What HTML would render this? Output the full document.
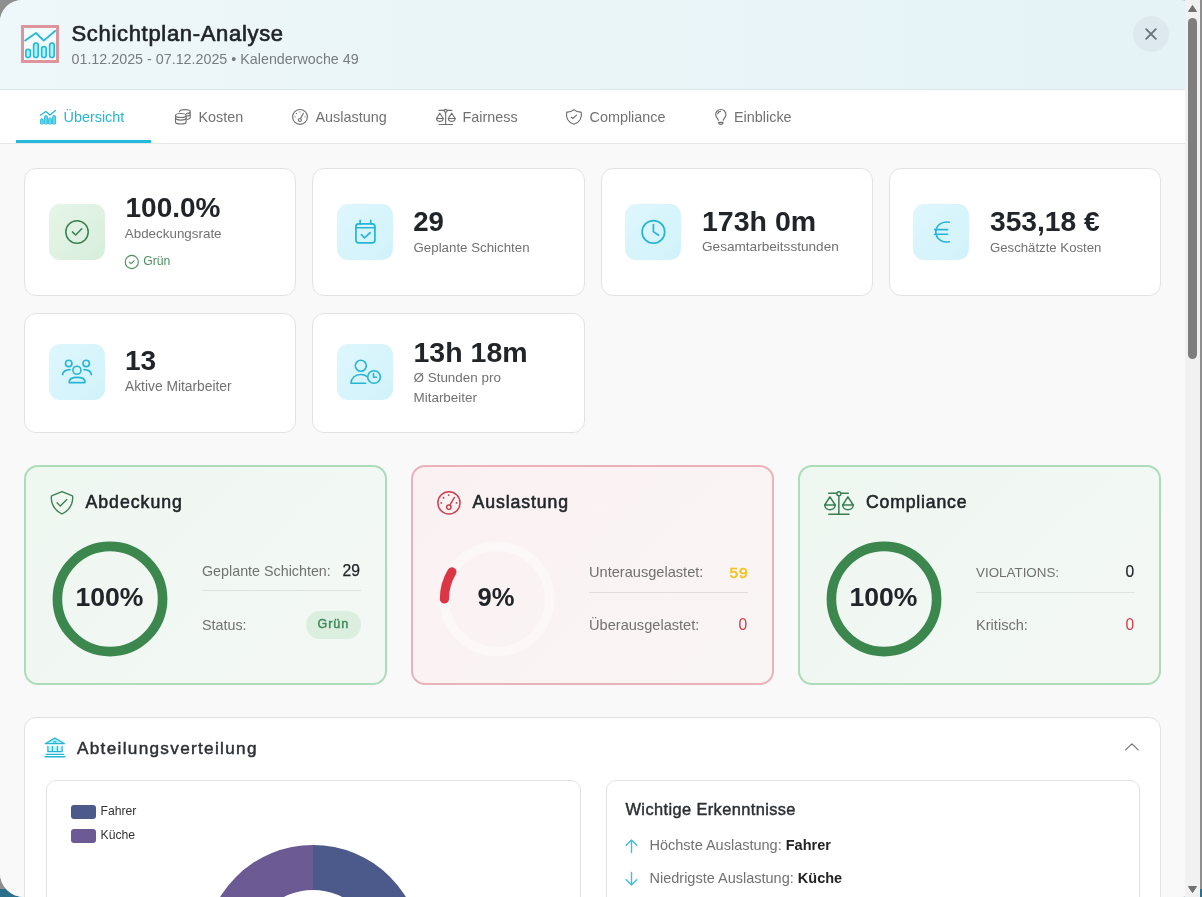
<!DOCTYPE html>
<html><head><meta charset="utf-8"><title>Schichtplan-Analyse</title>
<style>
html,body{margin:0;padding:0;width:1202px;height:897px;overflow:hidden;font-family:"Liberation Sans", sans-serif;}
body{background:#8e8e8e;position:relative}
#bgteal{position:absolute;left:0;top:889px;width:1202px;height:8px;background:#2c6f8b}
#modal{position:absolute;left:0;top:0;width:1200px;height:897px;will-change:transform;border-radius:22px 20px 20px 24px;overflow:hidden;background:#f8f8f8}
.abs{position:absolute}
.t{position:absolute;white-space:nowrap}
#header{position:absolute;left:0;top:0;width:1200px;height:89px;background:linear-gradient(90deg,#eef7f9,#e5f3f6);border-bottom:1px solid #dfe5e8}
#tabs{position:absolute;left:0;top:90px;width:1200px;height:53px;background:#fff;border-bottom:1px solid #e6e6e6}
#content{position:absolute;left:0;top:144px;width:1200px;height:753px;background:#f9f9f9}
.card{position:absolute;box-sizing:border-box;background:#fff;border:1px solid #e2e2e2;border-radius:12px}
.big{position:absolute;box-sizing:border-box;border:2px solid;border-radius:14px}
</style></head><body>
<div id="bgteal"></div>
<div id="modal">
<div id="header"></div><svg class="abs" style="left:21px;top:25px" width="38" height="38" viewBox="0 0 38 38">
<rect x="1.5" y="1.5" width="35" height="35" fill="#f2fbfd" stroke="#dc959c" stroke-width="3"/>
<polyline points="3.5,16 15,8 22.7,15.6 34.7,5.5" fill="none" stroke="#25b6d8" stroke-width="1.8" stroke-linejoin="round"/>
<rect x="4.8" y="24.3" width="4.6" height="8.2" rx="2.3" fill="#a4f6fc" stroke="#25b6d8" stroke-width="1.6"/>
<rect x="12.6" y="18" width="4.6" height="14.5" rx="2.3" fill="#a4f6fc" stroke="#25b6d8" stroke-width="1.6"/>
<rect x="20.6" y="21.5" width="4.6" height="11" rx="2.3" fill="#a4f6fc" stroke="#25b6d8" stroke-width="1.6"/>
<rect x="28.6" y="18" width="4.6" height="14.5" rx="2.3" fill="#a4f6fc" stroke="#25b6d8" stroke-width="1.6"/>
</svg><div class="t" style="left:71.5px;top:22.98px;font-size:22px;line-height:22px;color:#212529;font-weight:400;-webkit-text-stroke:0.65px #212529;letter-spacing:0.68px;">Schichtplan-Analyse</div>
<div class="t" style="left:71.5px;top:51.60px;font-size:14.3px;line-height:14.3px;color:#777c80;font-weight:400;">01.12.2025 - 07.12.2025 • Kalenderwoche 49</div>
<div class="abs" style="left:1133px;top:16px;width:36px;height:36px;border-radius:18px;background:#dde9ee"></div><svg class="abs" style="left:1145px;top:28px" width="12" height="12" viewBox="0 0 12 12"><path d="M1.2 1.2L10.8 10.8M10.8 1.2L1.2 10.8" stroke="#6b7378" stroke-width="1.9" stroke-linecap="round"/></svg><div id="tabs"></div><div class="abs" style="left:16px;top:140px;width:135px;height:3px;background:#22bbdd"></div><div class="t" style="left:63.5px;top:109.61px;font-size:14.4px;line-height:14.4px;color:#26b5d6;font-weight:400;">Übersicht</div>
<div class="t" style="left:198.5px;top:109.61px;font-size:14.4px;line-height:14.4px;color:#717171;font-weight:400;">Kosten</div>
<div class="t" style="left:315.5px;top:109.61px;font-size:14.4px;line-height:14.4px;color:#717171;font-weight:400;">Auslastung</div>
<div class="t" style="left:462.5px;top:109.61px;font-size:14.4px;line-height:14.4px;color:#717171;font-weight:400;">Fairness</div>
<div class="t" style="left:589.5px;top:109.61px;font-size:14.4px;line-height:14.4px;color:#717171;font-weight:400;">Compliance</div>
<div class="t" style="left:734px;top:109.61px;font-size:14.4px;line-height:14.4px;color:#717171;font-weight:400;">Einblicke</div>
<svg class="abs" style="left:36px;top:104px" width="24" height="24" viewBox="0 0 24 24" fill="none" stroke="#26b5d6" stroke-width="1.15" stroke-linecap="round" stroke-linejoin="round"><path d="M4.6 19.6V16a1.3 1.3 0 0 1 2.6 0v3.6zM8.6 19.6V13a1.4 1.4 0 0 1 2.8 0v6.6zM12.6 19.6V15.3a1.4 1.4 0 0 1 2.8 0v4.3zM16.6 19.6V13a1.5 1.5 0 0 1 3 0v6.6z" fill="#5fdcf0" stroke="#26b5d6" stroke-width="0.9"/>
<polyline points="4.3,11.3 9.9,7.5 13.9,11.1 19.5,6.5" stroke="#26b5d6" stroke-width="1.3"/></svg>
<svg class="abs" style="left:170px;top:104px" width="24" height="24" viewBox="0 0 24 24" fill="none" stroke="#6f6f6f" stroke-width="1.15" stroke-linecap="round" stroke-linejoin="round"><path d="M9.6 7.7A5.3 2.05 0 0 1 20.2 7.7A5.3 2.05 0 0 1 16.5 9.65M20.2 7.7V13.6M17.2 12.15A5.3 2.05 0 0 0 20.2 10.3M17.2 15.45A5.3 2.05 0 0 0 20.2 13.6"/>
<path d="M5.5 11.5V18A5.3 2 0 0 0 16.1 18V11.5z" fill="#fff"/>
<ellipse cx="10.8" cy="11.5" rx="5.3" ry="2" fill="#fff"/>
<path d="M5.5 14.1A5.3 2 0 0 0 16.1 14.1"/></svg>
<svg class="abs" style="left:288px;top:104px" width="24" height="24" viewBox="0 0 24 24" fill="none" stroke="#6f6f6f" stroke-width="1.15" stroke-linecap="round" stroke-linejoin="round"><circle cx="12" cy="12.9" r="7.4"/><circle cx="11.9" cy="16" r="1.5"/><path d="M12.6 14.6L15.4 9.3"/>
<g fill="#6f6f6f" stroke="none"><circle cx="11.9" cy="7.9" r="0.65"/><circle cx="8.4" cy="9.4" r="0.65"/><circle cx="7.1" cy="12.8" r="0.65"/><circle cx="17" cy="12.8" r="0.65"/></g></svg>
<svg class="abs" style="left:432px;top:104px" width="28" height="24" viewBox="0 0 28 24" fill="none" stroke="#6f6f6f" stroke-width="1.15" stroke-linecap="round" stroke-linejoin="round"><path d="M7 6.4h4.9M15.5 6.4h4.3"/><circle cx="13.65" cy="6.8" r="1.4"/>
<path d="M13.65 8.2v12.3M7.1 20.5h13.5"/>
<path d="M7.8 9.2L4.5 14.5h6.8z"/><path d="M4.5 14.5c0 1.8 1.5 2.9 3.3 2.9s3.4-1.1 3.4-2.9"/>
<path d="M19.7 9.2l-3.3 5.3h6.8z"/><path d="M16.4 14.5c0 1.8 1.5 2.9 3.3 2.9s3.4-1.1 3.4-2.9"/></svg>
<svg class="abs" style="left:562px;top:104px" width="24" height="24" viewBox="0 0 24 24" fill="none" stroke="#6f6f6f" stroke-width="1.15" stroke-linecap="round" stroke-linejoin="round"><path d="M11.95 5.6a10 10 0 0 0 7.2 2.5a10 10 0 0 1-7.2 12.2a10 10 0 0 1-7.2-12.2a10 10 0 0 0 7.2-2.5"/>
<path d="M9.2 13.1l1.6 1.4l3.7-3.4"/></svg>
<svg class="abs" style="left:708px;top:104px" width="24" height="24" viewBox="0 0 24 24" fill="none" stroke="#6f6f6f" stroke-width="1.15" stroke-linecap="round" stroke-linejoin="round"><path d="M10.4 16.3C10 14.6 7.7 13.3 7.7 10.6a5.1 5.1 0 0 1 10.2 0c0 2.7-2.3 4-2.7 5.7"/>
<path d="M10.6 18.4h4.5a2.25 1.9 0 0 1-4.5 0z"/><path d="M9.7 9.8a3 3 0 0 1 2.8-2.4"/></svg>
<div id="content"></div><div class="card" style="left:24.0px;top:168px;width:272.25px;height:127.5px;"></div>
<div class="card" style="left:312.25px;top:168px;width:272.25px;height:127.5px;"></div>
<div class="card" style="left:600.5px;top:168px;width:272.25px;height:127.5px;"></div>
<div class="card" style="left:888.75px;top:168px;width:272.25px;height:127.5px;"></div>
<div class="card" style="left:24.0px;top:312.5px;width:272.25px;height:120px;"></div>
<div class="card" style="left:312.25px;top:312.5px;width:272.25px;height:120px;"></div>
<div class="abs" style="left:49px;top:204px;width:56px;height:56px;border-radius:11px;background:linear-gradient(135deg,#e6f5e9,#d7eedc)"></div>
<div class="abs" style="left:337px;top:204px;width:56px;height:56px;border-radius:11px;background:linear-gradient(135deg,#def7fc,#d1f2fb)"></div>
<div class="abs" style="left:625px;top:204px;width:56px;height:56px;border-radius:11px;background:linear-gradient(135deg,#def7fc,#d1f2fb)"></div>
<div class="abs" style="left:913px;top:204px;width:56px;height:56px;border-radius:11px;background:linear-gradient(135deg,#def7fc,#d1f2fb)"></div>
<div class="abs" style="left:49px;top:344px;width:56px;height:56px;border-radius:11px;background:linear-gradient(135deg,#def7fc,#d1f2fb)"></div>
<div class="abs" style="left:337px;top:344px;width:56px;height:56px;border-radius:11px;background:linear-gradient(135deg,#def7fc,#d1f2fb)"></div>
<svg class="abs" style="left:61px;top:216px" width="32" height="32" viewBox="0 0 32 32" fill="none" stroke="#3a7f51" stroke-width="1.5" stroke-linecap="round" stroke-linejoin="round"><circle cx="16" cy="16" r="11.2"/><path d="M11.4 15.9l3.2 3.1l6.2-6.2"/></svg>
<svg class="abs" style="left:349px;top:216px" width="32" height="32" viewBox="0 0 32 32" fill="none" stroke="#26b5d6" stroke-width="1.7" stroke-linecap="round" stroke-linejoin="round"><rect x="6.95" y="7.95" width="18.95" height="18.9" rx="2.6"/><path d="M6.95 11.75h18.95M11.1 4.4v3.5M21.75 4.4v3.5"/><path d="M12.4 18.6l3.1 3.3l5.6-5.15"/></svg>
<svg class="abs" style="left:637px;top:216px" width="32" height="32" viewBox="0 0 32 32" fill="none" stroke="#26b5d6" stroke-width="1.7" stroke-linecap="round" stroke-linejoin="round"><circle cx="16.4" cy="15.9" r="11.3"/><path d="M16.4 8.6v7l5.2 3.6"/></svg>
<svg class="abs" style="left:925px;top:216px" width="32" height="32" viewBox="0 0 32 32" fill="none" stroke="#26b5d6" stroke-width="1.6" stroke-linecap="round" stroke-linejoin="round"><path d="M24.3 6.2C16 4.8 10.8 10 10.8 16S16 27.2 24.3 25.8"/><path d="M9.6 13.6h13M9.6 18.3h13"/></svg>
<svg class="abs" style="left:61px;top:356px" width="32" height="32" viewBox="0 0 32 32" fill="none" stroke="#26b5d6" stroke-width="1.6" stroke-linecap="round" stroke-linejoin="round"><circle cx="7.7" cy="7.4" r="3.2"/><circle cx="25.2" cy="7.4" r="3.2"/><circle cx="15.9" cy="14.25" r="4"/><path d="M8.2 26.6v-0.6c0-3 3.5-4.6 7.9-4.6s7.9 1.6 7.9 4.6v0.6z"/><path d="M1.6 18.6c0.3-2.6 2.6-4.9 7.4-5"/><path d="M30.4 18.6c-0.3-2.6-2.6-4.9-7.4-5"/></svg>
<svg class="abs" style="left:349px;top:356px" width="32" height="32" viewBox="0 0 32 32" fill="none" stroke="#26b5d6" stroke-width="1.6" stroke-linecap="round" stroke-linejoin="round"><circle cx="11.8" cy="9.8" r="5.5"/><path d="M2 27.3c0-5 4-8.8 9.6-8.8c2.8 0 5 0.8 6.3 2M2 27.3h14.7"/><circle cx="25" cy="21" r="6.3"/><path d="M24.5 17.6v3.6h3"/></svg>
<div class="t" style="left:125.5px;top:193.70px;font-size:28px;line-height:28px;color:#212529;font-weight:700;">100.0%</div>
<div class="t" style="left:124.8px;top:227.16px;font-size:13.4px;line-height:13.4px;color:#717171;font-weight:400;">Abdeckungsrate</div>
<svg class="abs" style="left:124px;top:253.5px" width="16" height="16" viewBox="0 0 16 16" fill="none" stroke="#4b8f61" stroke-width="1.1" stroke-linecap="round" stroke-linejoin="round"><circle cx="7.8" cy="8" r="6.6"/><path d="M5.4 8.1l1.7 1.6l3.1-3.1"/></svg><div class="t" style="left:143.2px;top:255.27px;font-size:12.2px;line-height:12.2px;color:#4b8f61;font-weight:400;">Grün</div>
<div class="t" style="left:413.2px;top:207.74px;font-size:27.6px;line-height:27.6px;color:#212529;font-weight:700;">29</div>
<div class="t" style="left:413.5px;top:240.54px;font-size:13.3px;line-height:13.3px;color:#717171;font-weight:400;">Geplante Schichten</div>
<div class="t" style="left:702px;top:206.97px;font-size:28.5px;line-height:28.5px;color:#212529;font-weight:700;">173h 0m</div>
<div class="t" style="left:702px;top:240.29px;font-size:13.6px;line-height:13.6px;color:#717171;font-weight:400;">Gesamtarbeitsstunden</div>
<div class="t" style="left:990px;top:207.23px;font-size:28.2px;line-height:28.2px;color:#212529;font-weight:700;">353,18 €</div>
<div class="t" style="left:990px;top:240.63px;font-size:13.2px;line-height:13.2px;color:#717171;font-weight:400;">Geschätzte Kosten</div>
<div class="t" style="left:125px;top:346.90px;font-size:28px;line-height:28px;color:#212529;font-weight:700;">13</div>
<div class="t" style="left:125px;top:380.22px;font-size:13.8px;line-height:13.8px;color:#717171;font-weight:400;">Aktive Mitarbeiter</div>
<div class="t" style="left:413.5px;top:337.87px;font-size:28.5px;line-height:28.5px;color:#212529;font-weight:700;">13h 18m</div>
<div class="t" style="left:413.5px;top:371.21px;font-size:13.45px;line-height:13.45px;color:#717171;font-weight:400;">Ø Stunden pro</div>
<div class="t" style="left:413.5px;top:390.51px;font-size:13.45px;line-height:13.45px;color:#717171;font-weight:400;">Mitarbeiter</div>
<div class="big" style="left:24px;top:465px;width:363px;height:219.5px;border-color:#acdcb9;background:linear-gradient(135deg,#eff7f1,#f3f8f4)"></div><div class="big" style="left:411px;top:465px;width:363px;height:219.5px;border-color:#eab3bb;background:linear-gradient(135deg,#fbf1f2,#f9f5f5)"></div><div class="big" style="left:798px;top:465px;width:363px;height:219.5px;border-color:#acdcb9;background:linear-gradient(135deg,#eff7f1,#f3f8f4)"></div><div class="t" style="left:85.5px;top:493.62px;font-size:17.7px;line-height:17.7px;color:#212529;font-weight:400;-webkit-text-stroke:0.55px #212529;letter-spacing:0.98px;">Abdeckung</div>
<div class="t" style="left:472.5px;top:493.62px;font-size:17.7px;line-height:17.7px;color:#212529;font-weight:400;-webkit-text-stroke:0.55px #212529;letter-spacing:0.9px;">Auslastung</div>
<div class="t" style="left:866px;top:493.62px;font-size:17.7px;line-height:17.7px;color:#212529;font-weight:400;-webkit-text-stroke:0.55px #212529;letter-spacing:0.79px;">Compliance</div>
<svg class="abs" style="left:49px;top:490px" width="26" height="26" viewBox="0 0 26 26" fill="none" stroke="#3a7f51" stroke-width="1.5" stroke-linecap="round" stroke-linejoin="round">
<path d="M13 1.6L3.1 5.6Q2.3 6 2.3 6.9C2.1 14.5 6 20.5 13 24C20 20.5 23.9 14.5 23.7 6.9Q23.7 6 22.9 5.6Z" stroke-width="1.35"/>
<path d="M8.1 12.7l3.2 3.4l6.5-6.5" stroke-width="1.35"/></svg><svg class="abs" style="left:436px;top:490px" width="26" height="26" viewBox="0 0 26 26" fill="none" stroke="#c9404e" stroke-width="1.5" stroke-linecap="round">
<circle cx="12.95" cy="12.85" r="11.1"/><circle cx="12.85" cy="17.2" r="2.2"/><path d="M13.9 15.2L18.3 7.5"/>
<g fill="#c9404e" stroke="none"><circle cx="12.7" cy="5.1" r="0.95"/><circle cx="7.55" cy="7.7" r="0.95"/><circle cx="5.3" cy="12.9" r="0.95"/><circle cx="20.6" cy="12.9" r="0.95"/></g></svg><svg class="abs" style="left:822px;top:490px" width="34" height="26" viewBox="0 0 34 26" fill="none" stroke="#3a7f51" stroke-width="1.5" stroke-linecap="round" stroke-linejoin="round">
<path d="M6.8 3.2h7.3M19.6 3.2h6.7"/><circle cx="16.85" cy="3.8" r="2"/>
<path d="M16.85 5.8V24.2M6.8 24.2h20.2"/>
<path d="M7.9 6.8L2.7 15h10.5z"/><path d="M2.7 15c0 2.8 2.3 4.7 5.2 4.7s5.3-1.9 5.3-4.7"/>
<path d="M25.9 6.8L20.7 15h10.5z"/><path d="M20.7 15c0 2.8 2.3 4.7 5.2 4.7s5.3-1.9 5.3-4.7"/>
</svg><svg class="abs" style="left:50px;top:539px" width="120" height="120" viewBox="0 0 120 120"><circle cx="60" cy="60" r="52.6" fill="none" stroke="#3b874e" stroke-width="9.6"/></svg>
<svg class="abs" style="left:824px;top:539px" width="120" height="120" viewBox="0 0 120 120"><circle cx="60" cy="60" r="52.6" fill="none" stroke="#3b874e" stroke-width="9.6"/></svg>
<svg class="abs" style="left:0;top:0" width="1202" height="897" viewBox="0 0 1202 897"><circle cx="497" cy="599" r="52.6" fill="none" stroke="#ffffff" stroke-opacity="0.4" stroke-width="9.6"/><path d="M444.40 599.00A52.6 52.6 0 0 1 451.91 571.91" fill="none" stroke="#dc3545" stroke-width="9.2" stroke-linecap="round"/></svg>
<div class="t" style="left:75.5px;top:584.18px;font-size:26.6px;line-height:26.6px;color:#212529;font-weight:700;">100%</div>
<div class="t" style="left:477.5px;top:585.03px;font-size:25.6px;line-height:25.6px;color:#212529;font-weight:700;">9%</div>
<div class="t" style="left:849.5px;top:584.18px;font-size:26.6px;line-height:26.6px;color:#212529;font-weight:700;">100%</div>
<div class="t" style="left:202px;top:564.10px;font-size:14.3px;line-height:14.3px;color:#717171;font-weight:400;">Geplante Schichten:</div>
<div class="t" style="left:342.5px;top:562.91px;font-size:15.7px;line-height:15.7px;color:#212529;font-weight:400;-webkit-text-stroke:0.25px #212529;">29</div>
<div class="abs" style="left:202px;top:589.5px;width:159px;height:1px;background:#dfe3e0"></div><div class="t" style="left:202px;top:618.00px;font-size:14.3px;line-height:14.3px;color:#717171;font-weight:400;">Status:</div>
<div class="abs" style="left:305.5px;top:611px;width:55.5px;height:27.5px;border-radius:14px;background:#dbeee0"></div><div class="t" style="left:317.5px;top:617.93px;font-size:12.6px;line-height:12.6px;color:#3e8a59;font-weight:400;-webkit-text-stroke:0.45px #3e8a59;letter-spacing:0.9px;">Grün</div>
<div class="t" style="left:589px;top:565.34px;font-size:14.6px;line-height:14.6px;color:#717171;font-weight:400;">Unterausgelastet:</div>
<div class="t" style="left:729.5px;top:564.66px;font-size:15.4px;line-height:15.4px;color:#f2c21b;font-weight:400;-webkit-text-stroke:0.45px #f2c21b;letter-spacing:0.9px;">59</div>
<div class="abs" style="left:589px;top:592px;width:159px;height:1px;background:#e3dcdd"></div><div class="t" style="left:589px;top:618.24px;font-size:14.6px;line-height:14.6px;color:#717171;font-weight:400;">Überausgelastet:</div>
<div class="t" style="left:738.5px;top:617.39px;font-size:15.6px;line-height:15.6px;color:#d13a4a;font-weight:400;">0</div>
<div class="t" style="left:976px;top:566.36px;font-size:13.4px;line-height:13.4px;color:#717171;font-weight:400;">VIOLATIONS:</div>
<div class="t" style="left:1125.5px;top:564.49px;font-size:15.6px;line-height:15.6px;color:#212529;font-weight:400;-webkit-text-stroke:0.2px #212529;">0</div>
<div class="abs" style="left:976px;top:592px;width:159px;height:1px;background:#dfe3e0"></div><div class="t" style="left:976px;top:618.24px;font-size:14.6px;line-height:14.6px;color:#717171;font-weight:400;">Kritisch:</div>
<div class="t" style="left:1125.5px;top:617.39px;font-size:15.6px;line-height:15.6px;color:#d13a4a;font-weight:400;">0</div>
<div class="card" style="left:24px;top:717px;width:1137px;height:400px;border-radius:12px"></div>
<svg class="abs" style="left:43px;top:736px" width="24" height="24" viewBox="0 0 24 24" fill="none" stroke="#26b5d6" stroke-width="1.5" stroke-linecap="round" stroke-linejoin="round">
<path d="M2.2 7.7L11.8 2.1L21.6 7.7Z" fill="#b4f7fd" stroke-width="1.3"/><circle cx="11.9" cy="6.4" r="1.2" fill="#b4f7fd" stroke-width="1.1"/>
<rect x="4.9" y="10.4" width="14.2" height="5.3" fill="#c8fafd" stroke="none"/>
<path d="M4.9 10.4v5.3M9.4 10.4v5.3M14.4 10.4v5.3M19.1 10.4v5.3M4.9 15.7H19.1" stroke-width="1.3"/>
<path d="M3.2 18.4H20.7" stroke-width="1.2"/><path d="M2.2 20.7H21.7" stroke-width="1.6"/></svg><div class="t" style="left:77px;top:739.64px;font-size:17.2px;line-height:17.2px;color:#2b2f33;font-weight:400;-webkit-text-stroke:0.45px #2b2f33;letter-spacing:1.3px;">Abteilungsverteilung</div>
<svg class="abs" style="left:1120px;top:736px" width="24" height="20" viewBox="0 0 24 20"><path d="M5.6 13.9L11.9 7.9L18.2 13.9" fill="none" stroke="#6e6e6e" stroke-width="1.15" stroke-linecap="round" stroke-linejoin="round"/></svg><div class="card" style="left:45.5px;top:779.5px;width:535px;height:300px;border-radius:10px"></div>
<div class="card" style="left:605.5px;top:779.5px;width:534px;height:300px;border-radius:10px"></div>
<div class="abs" style="left:71px;top:805px;width:25px;height:14px;border-radius:3px;background:#4b5a8a"></div><div class="abs" style="left:71px;top:829px;width:25px;height:14px;border-radius:3px;background:#6b5a94"></div><div class="t" style="left:100.5px;top:805.17px;font-size:12.2px;line-height:12.2px;color:#333;font-weight:400;">Fahrer</div>
<div class="t" style="left:100.5px;top:829.17px;font-size:12.2px;line-height:12.2px;color:#333;font-weight:400;">Küche</div>
<svg class="abs" style="left:0;top:0" width="1202" height="897" viewBox="0 0 1202 897">
<path d="M313 845A109 109 0 0 1 422 954H377A64 64 0 0 0 313 890z" fill="#4b5a8a"/>
<path d="M313 845A109 109 0 0 0 204 954H249A64 64 0 0 1 313 890z" fill="#6b5a94"/>
</svg><div class="t" style="left:625.5px;top:801.12px;font-size:16.4px;line-height:16.4px;color:#2b2f33;font-weight:400;-webkit-text-stroke:0.45px #2b2f33;letter-spacing:0.39px;">Wichtige Erkenntnisse</div>
<svg class="abs" style="left:623px;top:838px" width="18" height="16" viewBox="0 0 18 16" fill="none" stroke="#3fbfe0" stroke-width="1.4" stroke-linecap="round" stroke-linejoin="round"><path d="M8.5 14.5V2M3.2 7.2l5.3-5.3l5.3 5.3"/></svg><svg class="abs" style="left:623px;top:871px" width="18" height="16" viewBox="0 0 18 16" fill="none" stroke="#3fbfe0" stroke-width="1.4" stroke-linecap="round" stroke-linejoin="round"><path d="M8.5 1.5V14M3.2 8.8l5.3 5.3l5.3-5.3"/></svg><div class="t" style="left:649.5px;top:838.43px;font-size:14.5px;line-height:14.5px;color:#717171;font-weight:400;">Höchste Auslastung: <b style="color:#222">Fahrer</b></div>
<div class="t" style="left:649.5px;top:870.93px;font-size:14.5px;line-height:14.5px;color:#717171;font-weight:400;">Niedrigste Auslastung: <b style="color:#222">Küche</b></div>

</div>
<div class="abs" style="left:1185px;top:0;width:15px;height:897px;background:#f1f1f1"></div><div class="abs" style="left:1188px;top:18px;width:9px;height:341px;border-radius:5px;background:#7e7e7e"></div><svg class="abs" style="left:1185px;top:0" width="15" height="897" viewBox="0 0 15 897"><path d="M3.5 11.5L7.5 5.5L11.5 11.5z" fill="#707070" stroke="#707070" stroke-linejoin="round" stroke-width="1"/><path d="M3.5 886.5L7.5 892.5L11.5 886.5z" fill="#707070" stroke="#707070" stroke-linejoin="round" stroke-width="1"/></svg>
</body></html>
